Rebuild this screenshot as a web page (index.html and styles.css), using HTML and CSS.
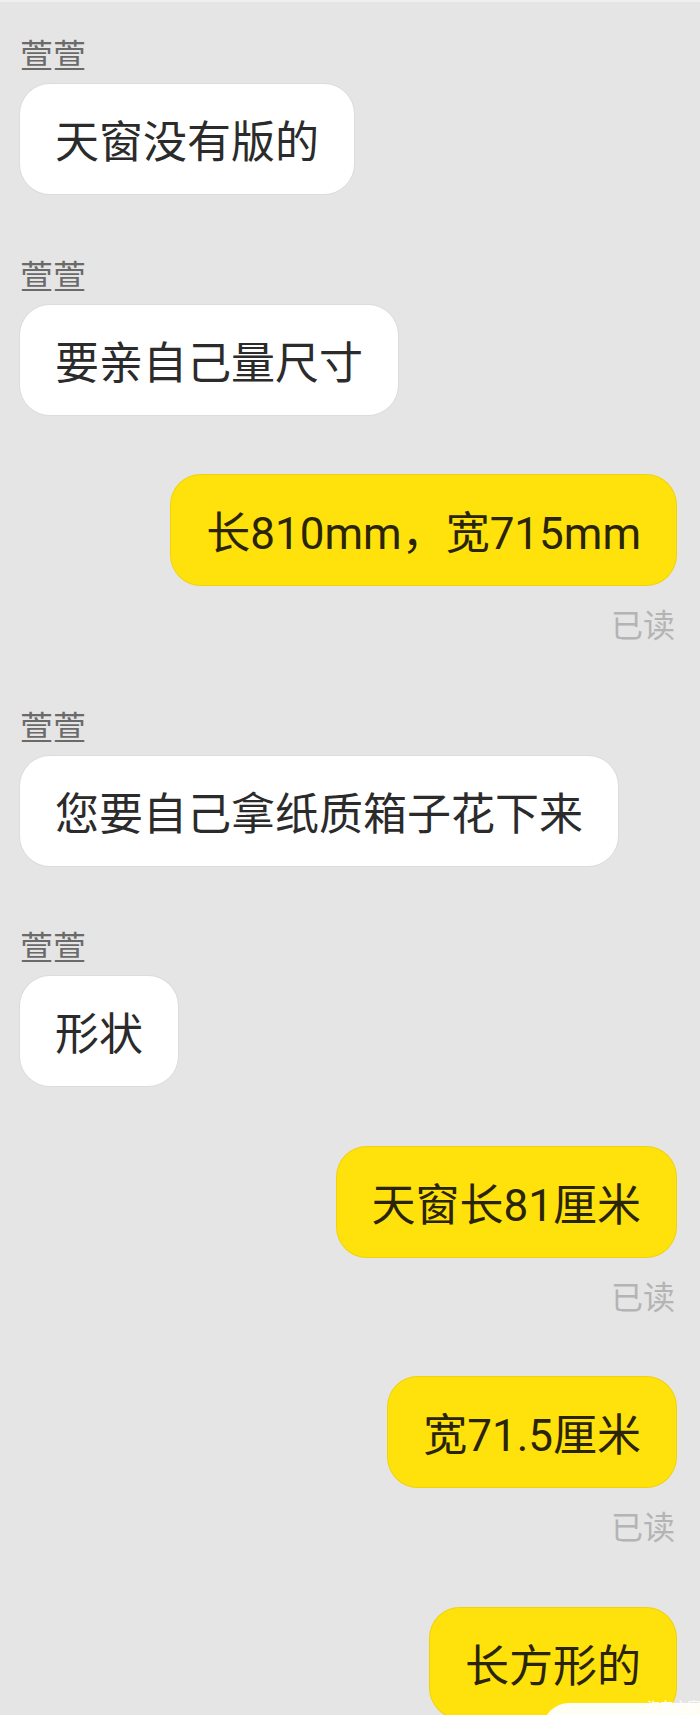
FILE: index.html
```html
<!DOCTYPE html>
<html lang="zh-CN">
<head>
<meta charset="utf-8">
<link rel="stylesheet" href="styles.css">
</head>
<body>
<div class="chat">
  <div class="group in">
    <div class="name">萱萱</div>
    <div class="bubble">天窗没有版的</div>
  </div>
  <div class="group in">
    <div class="name">萱萱</div>
    <div class="bubble">要亲自己量尺寸</div>
  </div>
  <div class="group out">
    <div class="bubble">长810mm，宽715mm</div>
    <div class="read">已读</div>
  </div>
  <div class="group in">
    <div class="name">萱萱</div>
    <div class="bubble">您要自己拿纸质箱子花下来</div>
  </div>
  <div class="group in">
    <div class="name">萱萱</div>
    <div class="bubble">形状</div>
  </div>
  <div class="group out">
    <div class="bubble">天窗长81厘米</div>
    <div class="read">已读</div>
  </div>
  <div class="group out">
    <div class="bubble">宽71.5厘米</div>
    <div class="read">已读</div>
  </div>
  <div class="group out">
    <div class="bubble">长方形的</div>
  </div>
</div>
<div class="overlay-card"></div>
<div class="watermark">汽车之家</div>
</body>
</html>
```
FILE: styles.css
```css
html, body {
  margin: 0;
  padding: 0;
}
body {
  width: 700px;
  height: 1715px;
  overflow: hidden;
  background: #e5e5e5;
  position: relative;
}
.chat {
  border-top: 2px solid #efefef;
  padding: 32px 24px 0 20px;
  display: flex;
  flex-direction: column;
  gap: 60.5px;
}
.group {
  display: flex;
  flex-direction: column;
}
.group.in {
  align-items: flex-start;
}
.group.out {
  align-items: flex-end;
}
.name {
  font-family: "Noto Sans CJK SC", sans-serif;
  font-size: 33px;
  line-height: 41px;
  color: #6a6a6a;
  margin-bottom: 9px;
}
.bubble {
  font-family: Roboto, "Noto Sans CJK SC", sans-serif;
  font-size: 44px;
  line-height: 56px;
  color: #2b2b2b;
  padding: 31px 35px 23px;
  border-radius: 30px;
  white-space: nowrap;
}
.in .bubble {
  background: #ffffff;
  box-shadow: 0 0 0 1px #dcdcdc;
}
.out .bubble {
  background: #ffe10c;
  box-shadow: 0 0 0 1px #f0d20a;
  color: #2a2508;
}
.read {
  font-family: "Noto Sans CJK SC", sans-serif;
  font-size: 32px;
  line-height: 40px;
  color: #b4b4b4;
  margin-top: 18px;
  margin-bottom: 2px;
  padding-right: 1px;
}
.overlay-card {
  position: absolute;
  left: 543px;
  top: 1703px;
  width: 200px;
  height: 60px;
  background: #fffef4;
  border-top-left-radius: 26px;
}
.watermark {
  position: absolute;
  left: 647px;
  top: 1697px;
  font-family: "Noto Sans CJK SC", sans-serif;
  font-size: 13px;
  line-height: 18px;
  letter-spacing: 0.5px;
  color: #ffffff;
  white-space: nowrap;
}
```
